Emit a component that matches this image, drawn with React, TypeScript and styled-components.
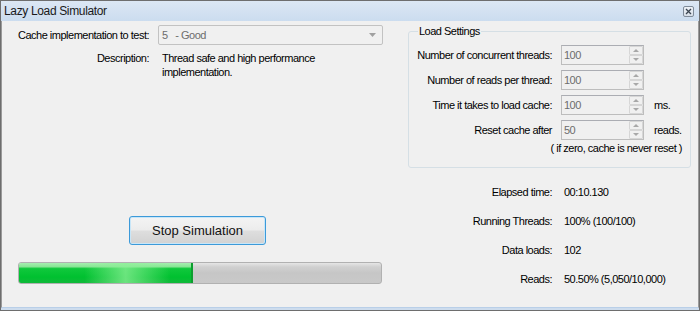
import { createGlobalStyle } from 'styled-components';
import styled from 'styled-components';

const GlobalStyle = createGlobalStyle`
  html, body {
    margin: 0;
    padding: 0;
    background: #f0f0f0;
  }
  * {
    box-sizing: border-box;
  }
`;

const settings = [
  { label: 'Number of concurrent threads:', value: '100', unit: '' },
  { label: 'Number of reads per thread:', value: '100', unit: '' },
  { label: 'Time it takes to load cache:', value: '100', unit: 'ms.' },
  { label: 'Reset cache after', value: '50', unit: 'reads.' },
];

const stats = [
  { label: 'Elapsed time:', value: '00:10.130' },
  { label: 'Running Threads:', value: '100% (100/100)' },
  { label: 'Data loads:', value: '102' },
  { label: 'Reads:', value: '50.50% (5,050/10,000)' },
];

const progress = 48;

const App = () => {
  return (
    <>
      <GlobalStyle />
      <Window>
        <TitleBar>
          <span>Lazy Load Simulator</span>
          <CloseButton>
            <svg width="7" height="7" viewBox="0 0 7 7">
              <path d="M1 1 L6 6 M6 1 L1 6" stroke="#3a4450" strokeWidth="1.3" />
            </svg>
          </CloseButton>
        </TitleBar>
        <Client>
          <LeftColumn>
            <FormGrid>
              <Label>Cache implementation to test:</Label>
              <ComboBox>
                <span>5   - Good</span>
                <svg width="7" height="4" viewBox="0 0 7 4">
                  <path d="M0 0 L7 0 L3.5 4 Z" fill="#a0a0a0" />
                </svg>
              </ComboBox>
              <Label $top>Description:</Label>
              <Description>
                Thread safe and high performance
                <br />
                implementation.
              </Description>
            </FormGrid>
            <StopButton>Stop Simulation</StopButton>
            <ProgressTrack>
              <ProgressFill style={{ width: `${progress}%` }} />
            </ProgressTrack>
          </LeftColumn>
          <RightColumn>
            <GroupBox>
              <legend>Load Settings</legend>
              <SettingsGrid>
                {settings.map((s) => (
                  <SettingRow key={s.label}>
                    <Label>{s.label}</Label>
                    <NumberBox>
                      <span>{s.value}</span>
                      <Spinner>
                        <SpinButton $up />
                        <SpinButton />
                      </Spinner>
                    </NumberBox>
                    <Unit>{s.unit}</Unit>
                  </SettingRow>
                ))}
                <Note>( if zero, cache is never reset )</Note>
              </SettingsGrid>
            </GroupBox>
            <StatsGrid>
              {stats.map((s) => (
                <StatRow key={s.label}>
                  <Label>{s.label}</Label>
                  <Value>{s.value}</Value>
                </StatRow>
              ))}
            </StatsGrid>
          </RightColumn>
        </Client>
      </Window>
    </>
  );
};

export default App;

const Window = styled.div`
  width: 700px;
  height: 311px;
  border: 1px solid #6e6e6e;
  display: flex;
  flex-direction: column;
  background: #cddced;
  font-family: 'Liberation Sans', Arial, sans-serif;
  font-size: 11px;
  letter-spacing: -0.5px;
  color: #000;
  overflow: hidden;
`;

const TitleBar = styled.div`
  height: 20px;
  flex: none;
  display: flex;
  align-items: center;
  justify-content: space-between;
  padding: 0 5px 0 3px;
  background: linear-gradient(#dce7f4, #cbdcef);
  font-size: 12px;
  letter-spacing: -0.35px;
  color: #1a1a1a;
`;

const CloseButton = styled.div`
  width: 11px;
  height: 11px;
  margin-top: 1px;
  border: 1px solid #7f8b99;
  border-radius: 2px;
  background: linear-gradient(#eef2f7, #d6dee8);
  display: flex;
  align-items: center;
  justify-content: center;
`;

const Client = styled.div`
  flex: 1;
  min-height: 0;
  display: flex;
  background: #f0f0f0;
  padding: 4px 0 0 16px;
  border-left: 1px solid #9a9a9a;
  border-right: 1px solid #9a9a9a;
  border-bottom: 1px solid #b9cfe8;
  margin-bottom: 2px;
`;

const LeftColumn = styled.div`
  width: 365px;
  display: flex;
  flex-direction: column;
  padding-bottom: 23px;
`;

const FormGrid = styled.div`
  display: grid;
  grid-template-columns: 131px 225px;
  column-gap: 9px;
  row-gap: 6px;
  align-items: center;
`;

const Label = styled.div<{ $top?: boolean }>`
  text-align: right;
  white-space: nowrap;
  line-height: 14px;
  align-self: ${(p) => (p.$top ? 'start' : 'center')};
`;

const ComboBox = styled.div`
  height: 20px;
  border: 1px solid #c2c2c2;
  border-radius: 2px;
  background: #f0f0f0;
  display: flex;
  align-items: center;
  justify-content: space-between;
  padding: 0 6px 0 3px;
  color: #6d6d6d;
  white-space: pre;
`;

const Description = styled.div`
  padding-left: 4px;
  line-height: 14px;
`;

const StopButton = styled.button`
  margin-top: auto;
  margin-left: 111px;
  width: 137px;
  height: 29px;
  border: 1px solid #3c9ad9;
  border-radius: 3px;
  box-shadow: inset 0 0 0 1px #c8e6f8;
  background: linear-gradient(#f4f4f4 0%, #ececec 48%, #dedede 52%, #d2d2d2 100%);
  font-family: 'Liberation Sans', Arial, sans-serif;
  font-size: 13px;
  letter-spacing: 0;
  color: #111;
  padding: 0;
`;

const ProgressTrack = styled.div`
  margin-top: 17px;
  height: 22px;
  width: 364px;
  border: 1px solid #b1b1b1;
  border-radius: 3px;
  background: linear-gradient(#e6e6e6 0%, #d0d0d0 20%, #c6c6c6 50%, #c9c9c9 100%);
  overflow: hidden;
  display: flex;
`;

const ProgressFill = styled.div`
  height: 100%;
  border-right: 2px solid #0d9e2f;
  background:
    linear-gradient(
      to right,
      rgba(140, 240, 150, 0) 38%,
      rgba(140, 240, 150, 0.75) 62%,
      rgba(140, 240, 150, 0) 88%
    ),
    linear-gradient(#a6eeb0 0%, #8ae596 18%, #10c83c 28%, #00c130 70%, #10b93a 100%);
`;

const RightColumn = styled.div`
  margin-left: 25px;
  display: flex;
  flex-direction: column;
`;

const GroupBox = styled.fieldset`
  width: 283px;
  margin: 0;
  min-width: 0;
  border: 1px solid #d5dfe5;
  border-radius: 3px;
  padding: 7px 8px 12px 5px;

  legend {
    padding: 0 1px;
    margin-left: 4px;
    line-height: 13px;
  }
`;

const SettingsGrid = styled.div`
  display: flex;
  flex-direction: column;
  gap: 5px;
`;

const SettingRow = styled.div`
  display: grid;
  grid-template-columns: 138px 83px auto;
  column-gap: 9px;
  align-items: center;
`;

const NumberBox = styled.div`
  height: 20px;
  border: 1px solid #bdbdbd;
  border-top-color: #abadb3;
  background: #f0f0f0;
  display: flex;
  align-items: center;
  justify-content: space-between;
  padding-left: 2px;
  color: #6d6d6d;
`;

const Spinner = styled.div`
  width: 14px;
  height: 18px;
  display: flex;
  flex-direction: column;
`;

const SpinButton = styled.div<{ $up?: boolean }>`
  flex: 1;
  border: 1px solid #d6d6d6;
  border-radius: 1px;
  display: flex;
  align-items: center;
  justify-content: center;

  &::after {
    content: '';
    border-left: 3px solid transparent;
    border-right: 3px solid transparent;
    ${(p) =>
      p.$up ? 'border-bottom: 3px solid #a8a8a8;' : 'border-top: 3px solid #a8a8a8;'}
  }
`;

const Unit = styled.div`
  padding-left: 1px;
`;

const Note = styled.div`
  margin-top: -3px;
  text-align: right;
  line-height: 13px;
`;

const StatsGrid = styled.div`
  margin-top: 9px;
  display: flex;
  flex-direction: column;
`;

const StatRow = styled.div`
  height: 29px;
  display: grid;
  grid-template-columns: 144px auto;
  column-gap: 12px;
  align-items: center;
`;

const Value = styled.div`
  white-space: nowrap;
`;
